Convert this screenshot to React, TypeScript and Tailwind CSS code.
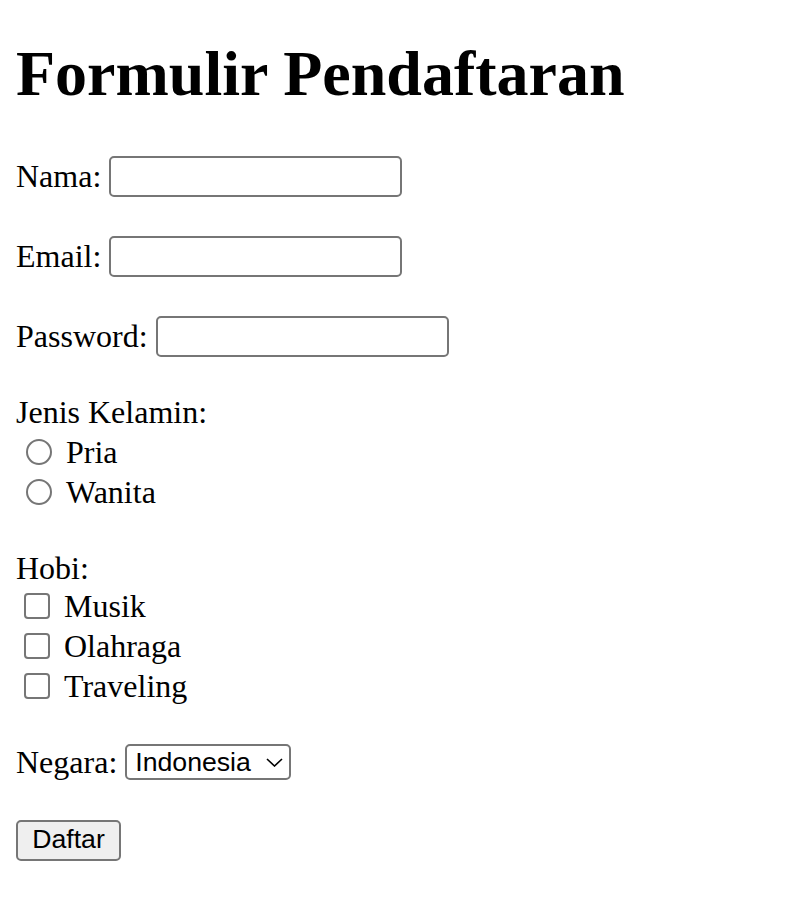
export default function App() {
  return (
    <div className="min-h-[904px] bg-white px-4 text-black font-['Liberation_Serif',serif] text-[32px]">
      <h1 className="pt-[42px] text-[64px] leading-[64px] font-bold">Formulir Pendaftaran</h1>

      <form className="flex flex-col" onSubmit={(e) => e.preventDefault()}>
        <div className="mt-[50px] flex h-[40px] items-center gap-2">
          <label>Nama:</label>
          <input type="text" className="h-[41px] w-[293px] rounded-[5px] border-2 border-[#767676] bg-white px-1 outline-none" />
        </div>

        <div className="mt-[40px] flex h-[40px] items-center gap-2">
          <label>Email:</label>
          <input type="email" className="h-[41px] w-[293px] rounded-[5px] border-2 border-[#767676] bg-white px-1 outline-none" />
        </div>

        <div className="mt-[40px] flex h-[40px] items-center gap-2">
          <label>Password:</label>
          <input type="password" className="h-[41px] w-[293px] rounded-[5px] border-2 border-[#767676] bg-white px-1 outline-none" />
        </div>

        <div className="mt-[36px] flex h-[40px] items-center">Jenis Kelamin:</div>
        <label className="flex h-[40px] items-center">
          <input type="radio" name="jk" className="ml-[10px] mr-[14px] h-[26px] w-[26px] appearance-none rounded-full border-2 border-[#767676] bg-white" />
          Pria
        </label>
        <label className="flex h-[40px] items-center">
          <input type="radio" name="jk" className="ml-[10px] mr-[14px] h-[26px] w-[26px] appearance-none rounded-full border-2 border-[#767676] bg-white" />
          Wanita
        </label>

        <div className="mt-[38px] flex h-[36px] items-center">Hobi:</div>
        <label className="flex h-[40px] items-center">
          <input type="checkbox" className="ml-[8px] mr-[14px] h-[26px] w-[26px] appearance-none rounded-[4px] border-2 border-[#767676] bg-white" />
          Musik
        </label>
        <label className="flex h-[40px] items-center">
          <input type="checkbox" className="ml-[8px] mr-[14px] h-[26px] w-[26px] appearance-none rounded-[4px] border-2 border-[#767676] bg-white" />
          Olahraga
        </label>
        <label className="flex h-[40px] items-center">
          <input type="checkbox" className="ml-[8px] mr-[14px] h-[26px] w-[26px] appearance-none rounded-[4px] border-2 border-[#767676] bg-white" />
          Traveling
        </label>

        <div className="mt-[36px] flex h-[40px] items-center gap-2">
          <label>Negara:</label>
          <div className="flex h-[36px] w-[166px] items-center rounded-[5px] border-2 border-[#767676] bg-white pl-[8px] pr-[6px] font-['Liberation_Sans',Arial,sans-serif] text-[26.67px]">
            <select className="w-full appearance-none bg-transparent outline-none">
              <option>Indonesia</option>
              <option>Malaysia</option>
              <option>Singapura</option>
            </select>
            <svg width="17" height="9" viewBox="0 0 17 9" className="shrink-0">
              <path d="M1 1 L8.5 8 L16 1" fill="none" stroke="#000" strokeWidth="1.6" />
            </svg>
          </div>
        </div>

        <div className="mt-[38px] flex">
          <button type="submit" className="h-[41px] w-[105px] rounded-[5px] border-2 border-[#767676] bg-[#efefef] pb-[2px] font-['Liberation_Sans',Arial,sans-serif] text-[26.67px] leading-none">
            Daftar
          </button>
        </div>
      </form>
    </div>
  );
}
